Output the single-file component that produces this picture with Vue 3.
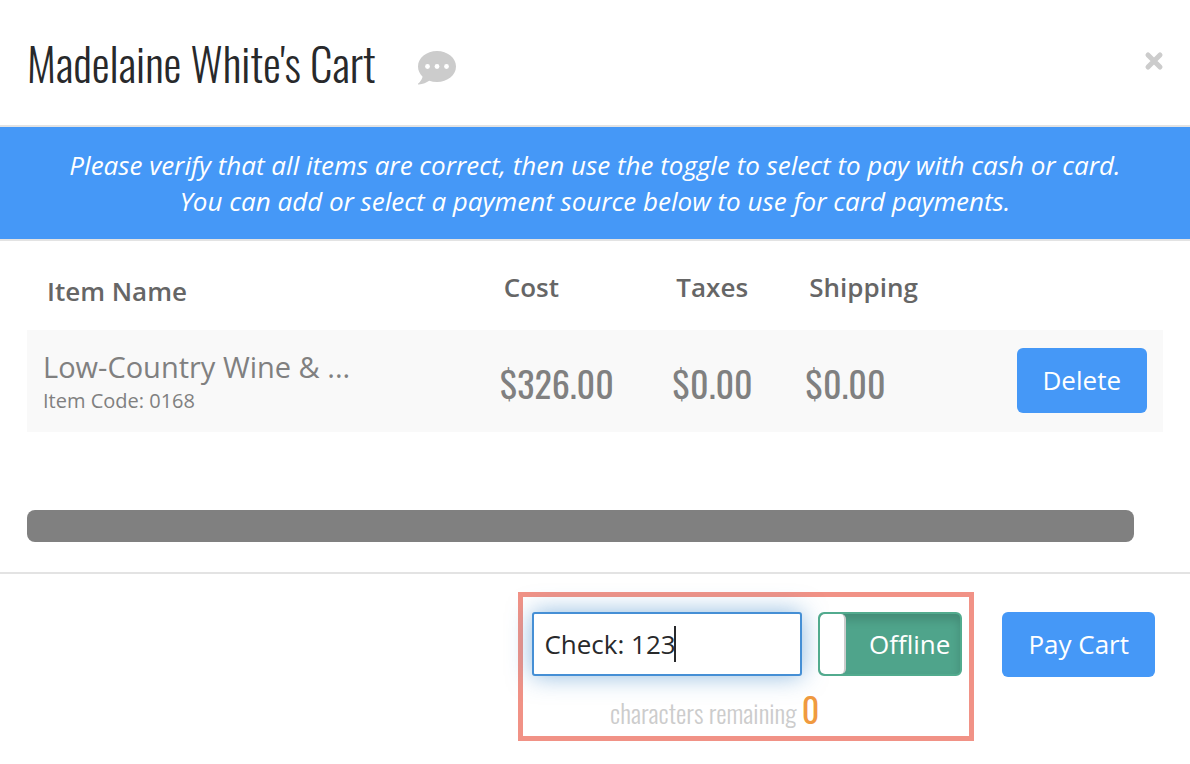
<script setup>
import { ref, onMounted, watch } from 'vue'

const note = ref('Check: 123')
const offline = ref(true)
const remaining = ref(0)
const field = ref(null)
const caret = ref(0)

const items = ref([
  { name: 'Low-Country Wine & ...', code: '0168', cost: '$326.00', taxes: '$0.00', shipping: '$0.00' }
])

function placeCaret() {
  const context = document.createElement('canvas').getContext('2d')
  context.font = getComputedStyle(field.value).font
  caret.value = Math.round(context.measureText(note.value).width)
}

onMounted(() => {
  field.value.focus()
  placeCaret()
})
watch(note, placeCaret)
</script>

<template>
  <main class="cart">
    <header class="head">
      <h1>Madelaine White's Cart</h1>
      <button class="icon comment" type="button" aria-label="Comments">
        <svg viewBox="0 0 40 36" width="40" height="36">
          <path fill="#ccc" d="M20 1C9.500 1 1 7.900 1 16.500c0 4 1.800 7.500 4.600 10.200C4.900 29.500 3.200 31.800 1.200 33.500c-.5.500-.1 1.200.6 1.100 4.200-.3 7.700-1.900 10.400-3.800 2.400.8 5 1.200 7.800 1.200 10.500 0 19-6.900 19-15.500S30.500 1 20 1Z" />
          <circle cx="10.500" cy="16.500" r="2.400" fill="#fff" />
          <circle cx="20" cy="16.500" r="2.400" fill="#fff" />
          <circle cx="29.500" cy="16.500" r="2.400" fill="#fff" />
        </svg>
      </button>
      <button class="icon close" type="button" aria-label="Close">
        <svg viewBox="0 0 20 20" width="20" height="20">
          <path d="M4 4l12 12M16 4L4 16" stroke="#ccc" stroke-width="5" stroke-linecap="round" />
        </svg>
      </button>
    </header>

    <p class="banner">
      Please verify that all items are correct, then use the toggle to select to pay with cash or card.<br />
      You can add or select a payment source below to use for card payments.
    </p>

    <section class="body">
      <table>
        <colgroup>
          <col class="c-name" /><col class="c-cost" /><col class="c-taxes" /><col class="c-shipping" /><col />
        </colgroup>
        <thead>
          <tr>
            <th class="first">Item Name</th>
            <th>Cost</th>
            <th>Taxes</th>
            <th>Shipping</th>
            <td></td>
          </tr>
        </thead>
        <tbody>
          <tr v-for="item in items" :key="item.code">
            <td>
              <div class="name">{{ item.name }}</div>
              <div class="code">Item Code: {{ item.code }}</div>
            </td>
            <td class="money">{{ item.cost }}</td>
            <td class="money">{{ item.taxes }}</td>
            <td class="money">{{ item.shipping }}</td>
            <td class="action"><button class="btn" type="button">Delete</button></td>
          </tr>
        </tbody>
      </table>
      <div class="bar"></div>
    </section>

    <footer class="foot">
      <div class="payment">
        <div class="controls">
          <div class="field">
            <input ref="field" v-model="note" type="text" aria-label="Payment note" />
            <span class="caret" :style="{ marginLeft: caret + 'px' }"></span>
          </div>
          <label class="toggle">
            <input v-model="offline" type="checkbox" />
            <span class="knob"></span>
            <span class="state">Offline</span>
          </label>
        </div>
        <p class="remaining">characters remaining <span class="count">{{ remaining }}</span></p>
      </div>
      <button class="btn" type="button">Pay Cart</button>
    </footer>
  </main>
</template>

<style>
body {
  margin: 0;
  background: #fff;
}
</style>

<style scoped>
* {
  box-sizing: border-box;
}
.cart {
  font-family: "Open Sans", sans-serif;
  font-size: 26px;
  color: #28292b;
}
h1,
.money,
.remaining {
  font-family: Oswald, "Open Sans Condensed", "Liberation Sans Narrow", "Liberation Sans", sans-serif;
}
.head {
  display: flex;
  align-items: center;
  height: 127px;
  padding: 0 26px 0 27px;
  border-bottom: 2px solid #e3e3e3;
}
h1 {
  margin: 0;
  font-size: 45px;
  font-weight: 300;
}
.icon {
  display: flex;
  padding: 0;
  border: 0;
  background: none;
}
.comment {
  margin: 10px 0 0 41px;
}
.close {
  margin: 0 0 4px auto;
}
.banner {
  margin: 0;
  padding: 20px 24px;
  border-bottom: 2px solid #e3e3e3;
  background: #4598f7;
  color: #fff;
  font-style: italic;
  font-weight: 500;
  line-height: 36px;
  text-align: center;
}
.body {
  padding: 20px 27px 30px;
  border-bottom: 2px solid #e3e3e3;
}
table {
  width: 100%;
  border-collapse: collapse;
  table-layout: fixed;
  color: #808080;
}
.c-name {
  width: 40.200%;
}
.c-cost {
  width: 15.200%;
}
.c-taxes {
  width: 11.700%;
}
.c-shipping {
  width: 14%;
}
th {
  height: 69px;
  padding: 0 0 0 20px;
  color: #666;
  font-weight: 600;
  line-height: 36px;
  text-align: left;
  vertical-align: bottom;
}
th.first {
  padding-bottom: 21px;
}
th:not(.first) {
  padding-bottom: 25px;
}
tbody tr {
  height: 102px;
  background: #f9f9f9;
}
tbody td {
  padding: 2px 16px 0;
}
.name {
  font-size: 29px;
  line-height: 38px;
}
.code {
  font-size: 20px;
  line-height: 30px;
}
.money {
  font-size: 36px;
  font-weight: 400;
}
.action {
  padding: 0 16px 2px;
  text-align: right;
}
.btn {
  height: 65px;
  padding: 0 26px;
  border: 0;
  border-radius: 6px;
  background: #4598f7;
  color: #fff;
  font: 500 26px "Open Sans", sans-serif;
}
.bar {
  height: 32px;
  margin: 78px 29px 0 0;
  border-radius: 8px;
  background: #808080;
}
.foot {
  display: flex;
  justify-content: flex-end;
  align-items: flex-start;
  gap: 28px;
  padding: 18px 35px 22px;
}
.foot > .btn {
  margin-top: 20px;
  padding-bottom: 2px;
}
.payment {
  padding: 15px 7px 0 9px;
  border: 5px solid #f19286;
}
.controls {
  display: flex;
  gap: 16px;
}
.field {
  position: relative;
}
.field input {
  display: block;
  width: 270px;
  height: 64px;
  padding: 0 10px;
  border: 2px solid #458fd5;
  border-radius: 3px;
  outline: 0;
  box-shadow: 0 0 24px rgba(66, 139, 202, 0.6);
  background: #fff;
  color: #28292b;
  caret-color: transparent;
  font: 26px "Open Sans", sans-serif;
}
.caret {
  position: absolute;
  top: 14px;
  left: 11px;
  width: 2px;
  height: 36px;
  background: #28292b;
}
.toggle {
  position: relative;
  display: flex;
  width: 144px;
  height: 64px;
  border: 2px solid #52ab8e;
  border-radius: 6px;
  background: #4fa48b;
  box-shadow: inset 0 6px 10px rgba(0, 0, 0, 0.15);
  color: #fff;
  font-weight: 500;
}
.toggle input {
  position: absolute;
  inset: 0;
  width: 100%;
  height: 100%;
  margin: 0;
  opacity: 0;
}
.knob {
  width: 26px;
  border-right: 2px solid #ccc;
  border-radius: 5px;
  background: #fff;
}
.state {
  flex: 1;
  padding-right: 10px;
  line-height: 60px;
  text-align: right;
}
.remaining {
  margin: 0;
  height: 60px;
  padding-right: 143px;
  color: #ccc;
  font-size: 26px;
  font-weight: 300;
  line-height: 74px;
  text-align: right;
  white-space: nowrap;
}
.count {
  color: #f09a40;
  font-size: 34px;
  font-weight: 400;
  line-height: 36px;
}
</style>
